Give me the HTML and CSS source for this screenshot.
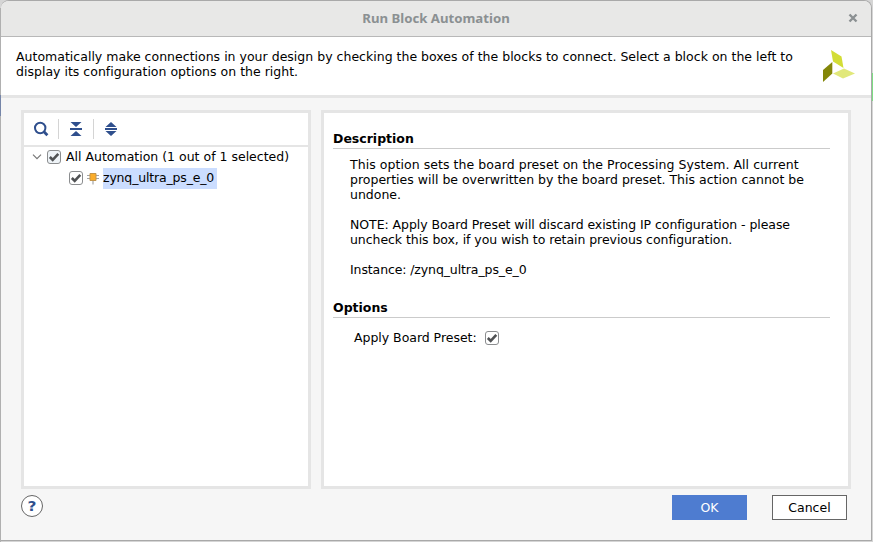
FILE: index.html
```html
<!DOCTYPE html>
<html lang="en">
<head>
<meta charset="utf-8">
<title>Run Block Automation</title>
<link rel="stylesheet" href="styles.css">
</head>
<body>
<div class="dialog">
  <header class="titlebar">
    <h1 class="title">Run Block Automation</h1>
    <svg class="close" width="10" height="10" viewBox="0 0 10 10"><path d="M1.5 1.5 8.5 8.5M8.5 1.5 1.5 8.5" stroke="#8b9092" stroke-width="2.4"/></svg>
  </header>
  <section class="intro">
    <p class="intro-text">Automatically make connections in your design by checking the boxes of the blocks to connect. Select a block on the left to<br>display its configuration options on the right.</p>
    <svg class="logo" width="33" height="33" viewBox="0 0 33 33"><path d="M8 0 18.5 6.5 20.5 18 10 11.5Z" fill="#d3dd36"/><path d="M0 20 9.3 12V23.5L0 32Z" fill="#838608"/><path d="M10 23.5 21 18.5 32 23.5 20 28.5Z" fill="#e1e87a"/></svg>
  </section>
  <main class="content">
    <section class="panel tree-panel">
      <div class="toolbar">
        <svg class="tool" width="16" height="16" viewBox="0 0 16 16"><circle cx="7.2" cy="7" r="5.2" fill="none" stroke="#2f4f8d" stroke-width="2"/><path d="m11 10.8 3.4 3.4" stroke="#2f4f8d" stroke-width="2.8"/></svg>
        <i class="divider"></i>
        <svg class="tool" width="16" height="16" viewBox="0 0 16 16"><path d="M2.5 1H13.5L8 6ZM2.5 15H13.5L8 10ZM2 7H14V9H2Z" fill="#2f4f8d"/></svg>
        <i class="divider"></i>
        <svg class="tool" width="16" height="16" viewBox="0 0 16 16"><path d="M2.5 6H13.5L8 1ZM2.5 10H13.5L8 15ZM2 7H14V9H2Z" fill="#2f4f8d"/></svg>
      </div>
      <div class="row root">
        <svg class="arrow" width="10" height="6" viewBox="0 0 10 6"><path d="m1 .7 4 4 4-4" fill="none" stroke="#777" stroke-width="1.2"/></svg>
        <span class="check focus"><svg width="14" height="14" viewBox="0 0 14 14"><path d="m2.8 7 2.9 2.8 5.6-6" fill="none" stroke="#505254" stroke-width="2.6"/></svg></span>
        <span class="root-label">All Automation (1 out of 1 selected)</span>
      </div>
      <div class="row child">
        <span class="check"><svg width="14" height="14" viewBox="0 0 14 14"><path d="m2.8 7 2.9 2.8 5.6-6" fill="none" stroke="#505254" stroke-width="2.6"/></svg></span>
        <svg class="chip" width="12" height="13" viewBox="0 0 12 13"><path d="M0 3.5H12M0 6.5H12M6 9V12.5" stroke="#a3a5a8" stroke-width="1.2"/><path d="M3 1.5H9V8.5H3Z" fill="#fbad2b" stroke="#c3954a"/></svg>
        <span class="selected">zynq_ultra_ps_e_0</span>
      </div>
    </section>
    <section class="panel detail-panel">
      <h2 class="heading h-desc">Description</h2>
      <div class="description">
        <p><span class="wide">This option sets the board preset on the Processing System. All current</span><br>properties will be overwritten by the board preset. This action cannot be<br>undone.</p>
        <p class="snug">NOTE: Apply Board Preset will discard existing IP configuration - please<br>uncheck this box, if you wish to retain previous configuration.</p>
        <p class="tight">Instance: /zynq_ultra_ps_e_0</p>
      </div>
      <h2 class="heading h-opt">Options</h2>
      <label class="option"><span class="option-label">Apply Board Preset:</span><span class="check"><svg width="14" height="14" viewBox="0 0 14 14"><path d="m2.8 7 2.9 2.8 5.6-6" fill="none" stroke="#505254" stroke-width="2.6"/></svg></span></label>
    </section>
  </main>
  <footer class="footer">
    <button class="help"><span class="mark">?</span></button>
    <button class="btn ok">OK</button>
    <button class="btn cancel">Cancel</button>
  </footer>
</div>
</body>
</html>
```

FILE: styles.css
```css
* { box-sizing: border-box; margin: 0; padding: 0; }
body {
  width: 873px; height: 542px; overflow: hidden; padding: 0 1px;
  background:
    linear-gradient(#7ddc83, #7ddc83) 872px 73px / 1px 28px no-repeat,
    linear-gradient(#7585a8, #7585a8) 0 95px / 1px 21px no-repeat,
    linear-gradient(#b0b0b0, #b0b0b0) 0 8px / 1px 534px no-repeat,
    #d5d5d5;
  font: 12.5px/15px "DejaVu Sans", sans-serif; color: #000;
}
.dialog { width: 871px; height: 541px; background: #f6f6f6; border: solid #a9a9a9; border-width: 1px 1px 1px 0; border-radius: 8px 8px 0 0; overflow: hidden; display: flex; flex-direction: column; }
.titlebar { height: 36px; flex: none; background: #e8e8e7; border-bottom: 1px solid #b8b8b8; display: flex; align-items: center; justify-content: center; position: relative; }
.title { font: bold 13.2px/18px "Noto Sans", sans-serif; color: #8b9092; padding-bottom: 2px; }
.close { position: absolute; right: 13px; top: 12px; }
.intro { height: 61px; flex: none; background: #fff; border-bottom: 3px solid #e5e5e5; display: flex; justify-content: space-between; padding: 12px 15px 0 15px; }
.intro-text { white-space: nowrap; letter-spacing: .013px; }
.logo { margin-top: 1px; }
.content { display: flex; gap: 10px; padding: 12px 0 0 20px; flex: none; }
.panel { height: 379px; background: #fff; border: 3px solid #e5e5e5; white-space: nowrap; }
.tree-panel { width: 290px; }
.detail-panel { width: 530px; padding: 18px 18px 0 9px; }
.toolbar { height: 34px; border-bottom: 2px solid #e5e5e5; display: flex; align-items: center; padding-left: 9px; }
.divider { width: 1px; height: 20px; background: #d4d4d4; margin: 0 9px; }
.row { display: flex; align-items: center; height: 21px; }
.root { padding-left: 8px; height: 20px; }
.arrow { margin-right: 5px; }
.check { width: 14px; height: 14px; border: 1px solid #8b8d8f; border-radius: 3px; background: #fff; display: inline-flex; align-items: center; justify-content: center; flex: none; }
.check svg { flex: none; }
.focus { background: #eef3f7; }
.root-label { margin-left: 5px; padding-bottom: 2px; }
.child { padding-left: 45px; height: 22px; }
.chip { margin: 0 3px 0 4px; }
.selected { background: #cbddff; height: 21px; line-height: 20px; margin-left: 1px; padding-right: 3px; letter-spacing: -.17px; }
.heading { font-size: 12.5px; line-height: 15px; height: 18px; border-bottom: 1px solid #cbcbcb; }
.description { padding: 8px 0 0 17px; }
.description p { margin-bottom: 15px; }
.wide { letter-spacing: .057px; }
.snug { letter-spacing: -.06px; }
.tight { letter-spacing: -.11px; }
.h-opt { margin-top: 23px; }
.option { display: flex; align-items: center; margin: 12px 0 0 21px; }
.option-label { margin-right: 8px; letter-spacing: -.03px; }
.footer { display: flex; align-items: flex-start; padding: 6px 24px 0 20px; }
.help { width: 22px; height: 22px; border: 1px solid #666; border-radius: 50%; background: #fff; color: #2f4f8d; font: bold 14px/20px "DejaVu Sans", sans-serif; }
.mark { display: block; transform: scaleX(1.1); }
.btn { width: 75px; height: 25px; font: 12.5px/23px "DejaVu Sans", sans-serif; }
.ok { margin-left: auto; background: #4e7cd0; color: #fff; border: 0; }
.cancel { margin-left: 25px; background: #fff; border: 1px solid #666; }
```
